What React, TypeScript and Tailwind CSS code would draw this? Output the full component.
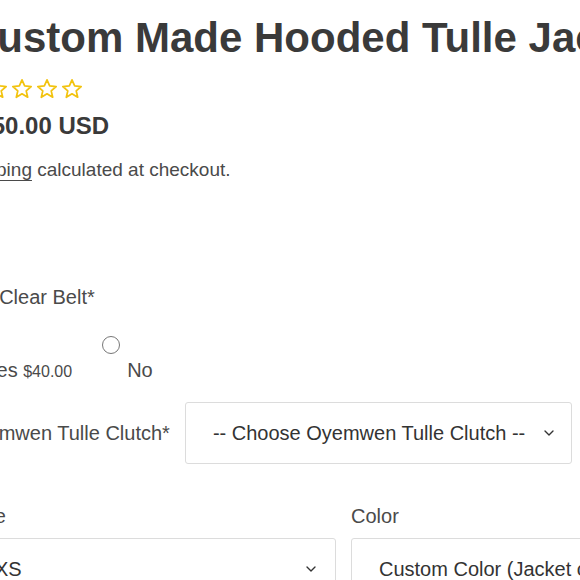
import { ChevronDown } from 'lucide-react';

function Star() {
  return (
    <svg width="22" height="22" viewBox="0 0 24 24" fill="none" stroke="#f2c30f" strokeWidth="1.9" strokeLinejoin="round">
      <polygon points="12,2 14.9,8.6 22,9.3 16.6,14 18.2,21 12,17.3 5.8,21 7.4,14 2,9.3 9.1,8.6" />
    </svg>
  );
}

function SelectBox({ text, className }: { text: string; className: string }) {
  return (
    <div className={`flex h-[62px] items-center justify-between rounded-[3px] border border-[#dcdcdc] bg-white pl-[27px] pr-[16px] text-[20px] text-[#333] ${className}`}>
      <span className="whitespace-nowrap">{text}</span>
      <ChevronDown size={16} strokeWidth={2} className="ml-4 shrink-0 text-[#333]" />
    </div>
  );
}

export default function App() {
  return (
    <div className="h-[580px] w-[580px] overflow-hidden bg-white" style={{ fontFamily: '"Liberation Sans", Arial, sans-serif' }}>
      <div className="ml-[-33px] w-[760px] pt-[13px] text-[#4a4a4a]">
        <h1 className="whitespace-nowrap text-[42px] font-bold leading-[50px] text-[#3a3a3a]">
          Custom Made Hooded Tulle Jacket
        </h1>

        <div className="ml-[-6px] mt-[15px] flex gap-[3px]">
          <Star />
          <Star />
          <Star />
          <Star />
          <Star />
        </div>

        <div className="ml-[-2px] mt-[11px] text-[24px] font-bold leading-[30px] text-[#3a3a3a]">$350.00 USD</div>

        <p className="ml-[-9px] mt-[17px] text-[19px] leading-[24px]">
          <span className="underline underline-offset-[4px] decoration-1">Shipping</span> calculated at checkout.
        </p>

        <div className="ml-[-9px] mt-[103px] text-[20px] leading-[24px]">Add Clear Belt*</div>

        <div className="ml-[-7px] mt-[27px] flex items-start gap-[30px]">
          <div className="flex flex-col">
            <span className="h-[18px] w-[18px] rounded-full border border-[#777]" />
            <span className="ml-[25px] mt-[4px] whitespace-nowrap text-[20px] leading-[24px]">
              Yes <span className="text-[16px]">$40.00</span>
            </span>
          </div>
          <div className="flex flex-col">
            <span className="h-[18px] w-[18px] rounded-full border border-[#777]" />
            <span className="ml-[25px] mt-[4px] text-[20px] leading-[24px]">No</span>
          </div>
        </div>

        <div className="ml-[-5px] mt-[18px] flex items-center gap-[15px]">
          <span className="whitespace-nowrap text-[20px]">Oyemwen Tulle Clutch*</span>
          <SelectBox text="-- Choose Oyemwen Tulle Clutch --" className="w-[387px]" />
        </div>

        <div className="mt-[40px] grid w-[753px] grid-cols-2 gap-[15px]">
          <div>
            <div className="text-[20px] leading-[24px]">Size</div>
            <SelectBox text="XS" className="mt-[10px]" />
          </div>
          <div>
            <div className="text-[20px] leading-[24px]">Color</div>
            <SelectBox text="Custom Color (Jacket only)" className="mt-[10px]" />
          </div>
        </div>
      </div>
    </div>
  );
}
